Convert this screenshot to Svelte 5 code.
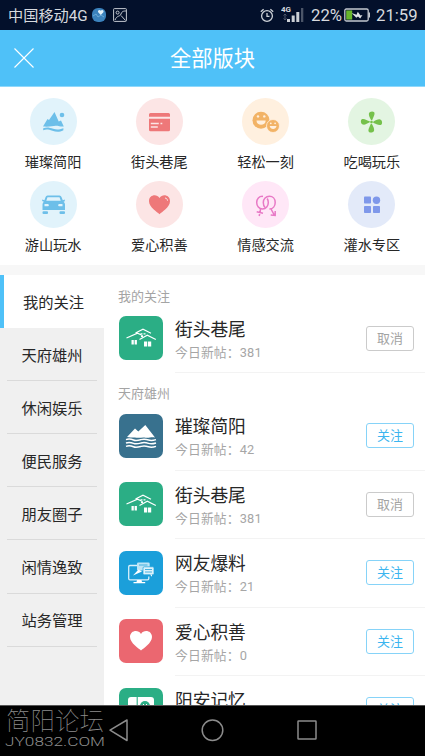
<script lang="ts">
  interface Board {
    name: string;
    icon: string;
    posts: number;
    followed: boolean;
  }

  const shortcuts = [
    { name: '璀璨简阳', icon: 'mountain', tone: 'sky' },
    { name: '街头巷尾', icon: 'card', tone: 'red' },
    { name: '轻松一刻', icon: 'smile', tone: 'orange' },
    { name: '吃喝玩乐', icon: 'fan', tone: 'green' },
    { name: '游山玩水', icon: 'car', tone: 'sky' },
    { name: '爱心积善', icon: 'heart', tone: 'red' },
    { name: '情感交流', icon: 'gender', tone: 'pink' },
    { name: '灌水专区', icon: 'blocks', tone: 'indigo' },
  ];

  const tabs = ['我的关注', '天府雄州', '休闲娱乐', '便民服务', '朋友圈子', '闲情逸致', '站务管理'];

  const street: Board = { name: '街头巷尾', icon: 'houses', posts: 381, followed: true };

  const sections: { title: string; boards: Board[] }[] = [
    { title: '我的关注', boards: [street] },
    {
      title: '天府雄州',
      boards: [
        { name: '璀璨简阳', icon: 'peaks', posts: 42, followed: false },
        street,
        { name: '网友爆料', icon: 'news', posts: 21, followed: false },
        { name: '爱心积善', icon: 'love', posts: 0, followed: false },
        { name: '阳安记忆', icon: 'memory', posts: 6, followed: false },
      ],
    },
  ];

  let active = $state(0);
</script>

<div class="screen">
  <div class="status">
    <span class="carrier">中国移动4G</span>
    <svg class="app-dot" viewBox="0 0 14 14">
      <rect width="14" height="14" rx="6" fill="#3b82bd" />
      <path d="M1 8l3-2 2 3 3-2 3 2" fill="none" stroke="#79b4de" stroke-width=".8" />
      <path d="M8.800 7L6.400 4.600C5 3 7.500 1 8.800 2.800C10.100 1 12.600 3 11.200 4.600z" fill="#e3f1fa" />
    </svg>
    <svg class="shot" viewBox="0 0 14 14" fill="none" stroke="#c3c8d0">
      <rect x=".6" y=".6" width="12.800" height="12.800" rx=".8" />
      <circle cx="4.600" cy="4.600" r="1.500" />
      <path d="M2 12C4 7 7 9 8 6S11 3 13 3M8 7.500l4.500 5" />
    </svg>
    <div class="status-right">
      <svg class="alarm" viewBox="0 0 14 15" fill="none" stroke="#ccd0d6" stroke-width="1.300">
        <circle cx="7" cy="8" r="5.400" />
        <path d="M7 5v3.300h2.500M.8 3.800L3.600 1.200M13.200 3.800L10.400 1.200" />
      </svg>
      <svg class="signal" viewBox="0 0 23 20">
        <text x="0" y="6.500" font-size="8" font-weight="bold" fill="#d5d8dd">4G</text>
        <path d="M4 9v6M2.500 10.500L4 9l1.500 1.500M2.500 13.500L4 15l1.500-1.500" fill="none" stroke="#4b5568" />
        <path d="M6 14h3v3H6zM10.700 10.500h3V17h-3zM15.300 7h3v10h-3z" fill="#ccd0d6" />
        <path d="M20 3h2.300v14H20z" fill="#4b5568" />
      </svg>
      <span class="percent">22%</span>
      <svg class="battery" viewBox="0 0 26 14">
        <rect x=".8" y="1" width="23.400" height="12" rx="1.500" fill="none" stroke="#c3c8d0" stroke-width="1.300" />
        <path d="M2.200 2.400h6v9.200h-6z" fill="#67b62c" />
        <path d="M24.500 4.500h1.500v5h-1.500z" fill="#c3c8d0" />
        <path d="M7.500 5l5 1.700 1.300-3 2.700 3.800 2-.500-2.300 3.500-2.200-2-1.700 1.200z" fill="#dfe2e6" />
      </svg>
      <span class="clock">21:59</span>
    </div>
  </div>

  <header>
    <svg class="close" viewBox="0 0 20 20"><path d="M.5.5l19 19M19.500.5l-19 19" stroke="#fff" stroke-width="1.100" /></svg>
    <h1>全部版块</h1>
  </header>

  <div class="shortcuts">
    {#each shortcuts as item (item.name)}
      <div class="shortcut">
        <div class="circle {item.tone}">
          <svg viewBox="0 0 47 47" fill="currentColor">
            {#if item.icon === 'mountain'}
              <path d="M13 28.500L17.500 21l1.500 1L24.500 14l4.200 9.500 2.300-1 2.800 6c-3 .300-5-.700-8-.700-3.500 0-6 1.300-12.800.700z" />
              <circle cx="32" cy="17" r="2.300" />
              <path d="M13.200 30.300c4-1.600 6-.800 10 .500 4 1.300 6 .700 10.200-.500v1.900c-4 2-7 1.900-11 .500-4-1.200-6-1.500-9.200-.500z" />
            {:else if item.icon === 'card'}
              <path d="M14.500 15h18q1.500 0 1.500 1.500V18.800H13v-2.300q0-1.500 1.500-1.500zM13 20.700h21v11q0 1.500-1.500 1.500h-18q-1.500 0-1.500-1.500z" />
              <path d="M14.800 25.500h8M24.500 25.500h1.800M14.800 29h7" stroke="#fce5e5" stroke-width="1.400" />
            {:else if item.icon === 'smile'}
              <circle cx="19" cy="22.300" r="8.500" />
              <circle cx="31" cy="28" r="6.500" stroke="#fff0df" stroke-width=".8" />
              <g fill="#fff0df">
                <circle cx="16" cy="18.400" r="1.200" /><circle cx="22.300" cy="18.400" r="1.200" />
                <path d="M14.500 22.500h9.200c0 5.800-9.200 5.800-9.200 0z" />
                <circle cx="28.800" cy="25.300" r=".9" /><circle cx="33.100" cy="25.300" r=".9" />
                <path d="M27.700 28h6.800c-.5 4-6.300 4-6.800 0z" />
              </g>
            {:else if item.icon === 'fan'}
              {#each [0, 90, 180, 270] as turn}
                <path transform="rotate({turn} 23.500 24)" d="M23.200 22.300C22 20 20.500 17.500 20.900 15.500C21.300 13.300 25 12.700 26.200 14.300C27.400 16.500 25 19.500 24.200 22.300z" />
              {/each}
              <circle cx="23.500" cy="24" r="1.300" />
            {:else if item.icon === 'car'}
              <path fill-rule="evenodd" d="M17.500 14.500h12q1.500 0 2 1.500l1.300 3.200 2-.700v1.700l-1.200.6q1.400 1 1.400 2.700V29H12.500v-5.500q0-1.700 1.400-2.700l-1.700-.8v-1.500l2.200.7L15.600 16q.5-1.500 1.900-1.500zM17.500 16.300l-1.200 3.500h14.400l-1.200-3.500zM14.500 23v2.300h3.700l.8-1-.8-1.300zM28 24.300l.8 1h3.700V23h-3.700z" />
              <rect x="12.500" y="30.200" width="5.500" height="2.700" rx="1" />
              <rect x="29.500" y="30.200" width="5.500" height="2.700" rx="1" />
            {:else if item.icon === 'heart'}
              <path d="M23.500 33.200C21.500 31.200 13 26 13 20.200C13 14 20.500 12.300 23.500 17C26.500 12.300 34 14 34 20.200C34 26 25.500 31.200 23.500 33.200z" />
              <path d="M29 17c1.700.2 2.400 1.200 2.500 2.700" fill="none" stroke="#fce5e5" stroke-width="1" />
            {:else if item.icon === 'gender'}
              <g fill="none" stroke="currentColor" stroke-width="1.500">
                <path d="M21 15.400C17 15 14.700 18 14.700 21.500C14.700 25 17 28 20.500 28S26.300 25 26.300 21.500C26.300 20 26 18.700 25.200 17.500" />
                <path d="M23 26.500C21.800 25.200 21.300 23.500 21.300 21.500C21.300 18 24 15.300 27.400 15.300S33.200 18 33.200 21.500S31 28 27.400 28" />
                <path d="M18.600 28L17.200 35M14.700 30.800l6.300 1.400M29 28l3.200 5.800M33.200 30v4.500l-4.500-.5" />
              </g>
            {:else}
              <rect x="16" y="15.500" width="7" height="7" rx=".8" />
              <circle cx="28.500" cy="19.300" r="3.700" />
              <rect x="16" y="25" width="7" height="7" rx=".8" />
              <rect x="25" y="25" width="7" height="7" rx=".8" />
            {/if}
          </svg>
        </div>
        <span class="shortcut-name">{item.name}</span>
      </div>
    {/each}
  </div>

  <main>
    <nav class="tabs">
      {#each tabs as tab, i (tab)}
        <button class="tab" class:active={active === i} onclick={() => (active = i)}>
          <span>{tab}</span>
        </button>
      {/each}
    </nav>

    <div class="boards">
      {#each sections as section (section.title)}
        <h2>{section.title}</h2>
        {#each section.boards as board (board.name)}
          <div class="board">
            <svg class="board-icon {board.icon}" viewBox="0 0 44 44">
              {#if board.icon === 'houses'}
                <g fill="none" stroke="#fff" stroke-width="1.100">
                  <path d="M7.500 22L18.500 17.200l4 1.800M16.500 17l7.500-3.800 8 4M20.500 23.500l7.800-4.300 8.500 4.300" />
                </g>
                <path d="M12.500 24h2.300v4.500h-2.300zM15.600 24h2.300v4.500h-2.300zM25 25.500h3.200v5H25zM29 25.500h3.200v5H29zM21.500 17.300h2v1.300h-2zM24.500 17.300h2v1.300h-2zM22 19.300h2V21h-2z" fill="#fff" />
              {:else if board.icon === 'peaks'}
                <path d="M8 23L16 14.500l3.300 3L26.300 11l9.700 12.500c-4-.8-6 .8-9.500.200-3-.700-6 .5-9 0-3.500-.8-6 .3-9.500-.700z" fill="#fff" />
                <g fill="none" stroke="#fff" stroke-width="1.500">
                  {#each [25.600, 29, 32.400] as y}
                    <path d="M7 {y}c3-1.200 5-.7 7.500.400s5 .300 7.500-.400 5-.5 7.500.400 5 .4 7.500-.4" />
                  {/each}
                </g>
              {:else if board.icon === 'news'}
                <path d="M18 14.500h-7q-1.300 0-1.300 1.300v11.700q0 1.300 1.300 1.300h17.500q1.300 0 1.300-1.300v-2" fill="none" stroke="#d9f0fb" stroke-width="1.300" />
                <path d="M18 29h4.500l.5 2h3.200v1.300H14.500V31H17.500z" fill="#fff" />
                <rect x="18" y="11.500" width="12.700" height="8" rx="1.300" fill="#bfe5f6" />
                <path d="M19.500 18.500l-5.500 6 9-4z" fill="#fff" />
                <rect x="24" y="15.800" width="11" height="8" rx="1.300" fill="#dff3fb" stroke="#1b9fda" stroke-width=".7" />
                <path d="M20 14h8.500M26 18.500h7M26 21h7" stroke="#36a9dc" stroke-width=".9" />
                <path d="M31 23.500h2v2.300z" fill="#fff" />
              {:else if board.icon === 'love'}
                <path d="M22 31.500C20 29.500 11 24 11 18C11 11.700 19 10 22 15C25 10 33 11.700 33 18C33 24 24 29.500 22 31.500z" fill="#fff" />
              {:else}
                <rect x="9" y="9" width="26" height="24" rx="3" fill="#fff" />
                <path d="M18.200 9v24" stroke="#2bae85" stroke-width="1.100" />
                <circle cx="26" cy="18" r="5" fill="#2bae85" />
                <path d="M23 18.500h6M24.500 16v2M27.500 16v2" stroke="#fff" />
              {/if}
            </svg>
            <div class="board-row">
              <div class="board-info">
                <div class="board-name">{board.name}</div>
                <div class="board-posts">今日新帖：{board.posts}</div>
              </div>
              <button class="follow" class:followed={board.followed}>{board.followed ? '取消' : '关注'}</button>
            </div>
          </div>
        {/each}
      {/each}
    </div>
  </main>

  <footer>
    <div class="watermark">
      <div class="mark-name">简阳论坛</div>
      <svg class="mark-site" viewBox="0 0 101 12">
        <text x="0" y="10" textLength="100" lengthAdjust="spacingAndGlyphs">JY0832.COM</text>
      </svg>
    </div>
    <svg class="keys" viewBox="0 0 425 50" fill="none" stroke="#8c8c8c" stroke-width="1.500">
      <path d="M110 24.200L127 14v20.500z" stroke-linejoin="round" />
      <circle cx="212.500" cy="24.200" r="10.300" />
      <rect x="298" y="15" width="18" height="18" rx=".5" />
    </svg>
  </footer>
</div>

<style>
  :global(body) {
    margin: 0;
    background: #fff;
  }

  .screen {
    width: 425px;
    height: 756px;
    display: flex;
    flex-direction: column;
    overflow: hidden;
    background: #fff;
    color: #272727;
    font-family: Roboto, 'Noto Sans CJK SC', sans-serif;
  }

  svg {
    display: block;
    flex-shrink: 0;
  }

  h1,
  h2 {
    margin: 0;
    font-weight: 400;
  }

  button {
    border: 0;
    padding: 0;
    background: none;
    color: inherit;
    font: inherit;
  }

  .status {
    flex: 0 0 30px;
    display: flex;
    align-items: center;
    box-sizing: border-box;
    padding: 0 7px 0 8px;
    background: #03102b;
    color: #d7dadf;
  }

  .carrier {
    font-size: 15.2px;
    line-height: 20px;
    white-space: nowrap;
    width: 84px;
    padding-top: 1px;
  }

  .app-dot {
    width: 14px;
    height: 14px;
  }

  .shot {
    width: 14px;
    height: 14px;
    margin-left: 7px;
  }

  .status-right {
    display: flex;
    align-items: center;
    margin-left: auto;
    font-size: 16.7px;
    line-height: 20px;
  }

  .alarm {
    width: 14px;
    height: 15px;
    margin-right: 7px;
  }

  .signal {
    width: 23px;
    height: 20px;
    margin-right: 7px;
  }

  .percent {
    width: 33px;
    padding-top: 1px;
  }

  .battery {
    width: 26px;
    height: 14px;
    margin-right: 6px;
  }

  .clock {
    width: 42px;
    padding-top: 1px;
    white-space: nowrap;
  }

  header {
    flex: 0 0 57px;
    box-sizing: border-box;
    display: grid;
    grid-template-columns: 60px 1fr 60px;
    align-items: center;
    background: #4fc1f8;
    border-bottom: 1px solid #8fd8fb;
    color: #fff;
  }

  .close {
    width: 20px;
    height: 20px;
    margin-left: 14px;
  }

  h1 {
    padding-top: 2px;
    font-size: 21.3px;
    line-height: 30px;
    text-align: center;
  }

  .shortcuts {
    flex: 0 0 178px;
    box-sizing: border-box;
    display: grid;
    grid-template-columns: repeat(4, 1fr);
    grid-auto-rows: 83px;
    padding-top: 11px;
  }

  .shortcut {
    display: flex;
    flex-direction: column;
    align-items: center;
  }

  .circle {
    width: 47px;
    height: 47px;
    border-radius: 50%;
  }

  .sky {
    background: #e1f3fb;
    color: #6dbfe9;
  }

  .red {
    background: #fce5e5;
    color: #ee7879;
  }

  .orange {
    background: #fff0df;
    color: #f2b366;
  }

  .green {
    background: #e3f5e2;
    color: #75c14b;
  }

  .pink {
    background: #ffe7f7;
    color: #e879c6;
  }

  .indigo {
    background: #e3eaf9;
    color: #7f98ea;
  }

  .shortcut-name {
    margin-top: 6px;
    font-size: 14.2px;
    line-height: 22px;
  }

  main {
    flex: 1;
    min-height: 0;
    display: flex;
    overflow: hidden;
    border-top: 10px solid #f7f7f7;
  }

  .tabs {
    flex: 0 0 104px;
    background: #f0f0f0;
  }

  .tab {
    display: block;
    width: 100%;
    height: 53.1px;
    padding: 0 7px;
  }

  .tab span {
    display: block;
    height: 53.1px;
    box-sizing: border-box;
    padding-top: 1.5px;
    border-bottom: 1px solid #dadada;
    font-size: 15.3px;
    line-height: 53px;
  }

  .tab.active {
    border-left: 4px solid #4fc1f8;
    padding: 0 2px 0 1px;
    background: #fff;
  }

  .tab.active span {
    border-bottom: 0;
  }

  .boards {
    flex: 1;
    min-width: 0;
    padding-left: 14px;
  }

  h2 {
    height: 29.3px;
    box-sizing: border-box;
    padding-top: 6.5px;
    font-size: 13px;
    line-height: 30px;
    color: #a4a4a4;
  }

  .board {
    display: flex;
    align-items: center;
    height: 68.5px;
  }

  .board-icon {
    width: 44px;
    height: 44px;
    margin: 0 0 1px 1px;
    border-radius: 7px;
  }

  .houses,
  .memory {
    background: #2bae85;
  }

  .peaks {
    background: #38718e;
  }

  .news {
    background: #1b9fda;
  }

  .love {
    background: #eb6770;
  }

  .board-row {
    flex: 1;
    height: 100%;
    box-sizing: border-box;
    margin-left: 12px;
    padding-right: 11px;
    display: flex;
    align-items: center;
    justify-content: space-between;
    border-bottom: 1px solid #f3f3f3;
  }

  .board-info {
    padding-top: 3px;
  }

  .board-name {
    font-size: 17.7px;
    line-height: 26px;
  }

  .board-posts {
    font-size: 12.8px;
    line-height: 20px;
    letter-spacing: 0.15px;
    color: #a6a6a6;
  }

  .follow {
    width: 48px;
    height: 25px;
    box-sizing: border-box;
    padding-top: 1px;
    border: 1px solid #86d3f8;
    border-radius: 3px;
    color: #3bb5ef;
    font-size: 13px;
    line-height: 22px;
  }

  .follow.followed {
    border-color: #cbcbcb;
    color: #a3a3a3;
  }

  footer {
    flex: 0 0 50px;
    position: relative;
    background: #000;
    box-sizing: border-box;
    border-top: 1px solid #555;
  }

  .keys {
    width: 425px;
    height: 50px;
  }

  /* site mark laid over the key bar */
  .watermark {
    position: absolute;
    left: 5px;
    top: 3px;
    color: #8c8c8c;
  }

  .mark-name {
    font-size: 24.5px;
    font-weight: 100;
    line-height: 26px;
    padding-left: 1px;
  }

  .mark-site {
    width: 101px;
    height: 12px;
    margin-top: 1px;
    fill: #8c8c8c;
    font-size: 12px;
    font-weight: 300;
  }
</style>
